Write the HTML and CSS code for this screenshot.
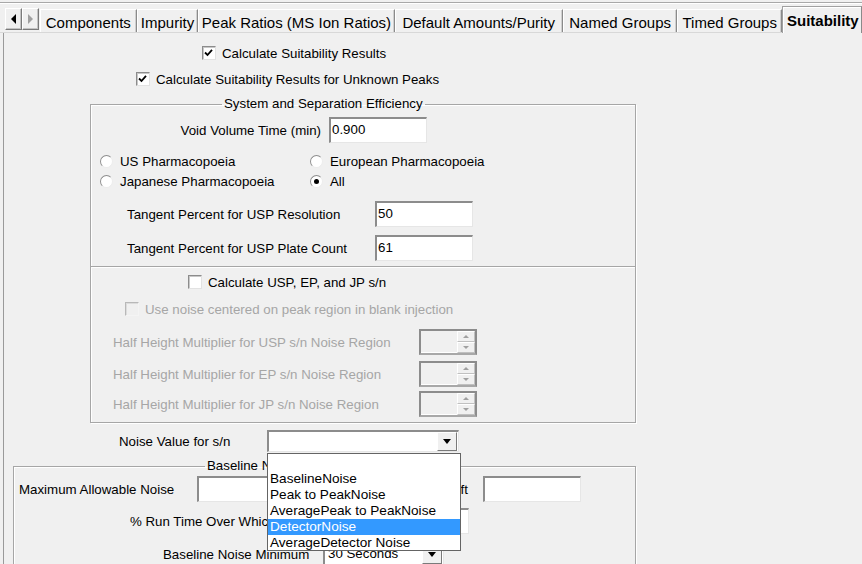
FILE: index.html
```html
<!DOCTYPE html>
<html>
<head>
<meta charset="utf-8">
<link rel="stylesheet" href="styles.css">
</head>
<body>
<div class="win">
  <div class="topline"></div>
  <div class="tabs">
    <div class="arrows">
      <div class="abtn"><span class="tri-l"></span></div>
      <div class="abtn"><span class="tri-r"></span></div>
    </div>
    <div class="tab w1">Components</div>
    <div class="tab w2">Impurity</div>
    <div class="tab w3">Peak Ratios (MS Ion Ratios)</div>
    <div class="tab w4">Default Amounts/Purity</div>
    <div class="tab w5">Named Groups</div>
    <div class="tab w6">Timed Groups</div>
    <div class="tab w7 sel">Suitability</div>
  </div>
  <div class="panel">
    <div class="row r-cb1">
      <span class="cb"><svg viewBox="0 0 13 13" width="13" height="13"><polyline points="3,6.5 5.5,9 10,3.8" fill="none" stroke="#000" stroke-width="1.8"/></svg></span>
      <span class="cbl">Calculate Suitability Results</span>
    </div>
    <div class="row r-cb2">
      <span class="cb"><svg viewBox="0 0 13 13" width="13" height="13"><polyline points="3,6.5 5.5,9 10,3.8" fill="none" stroke="#000" stroke-width="1.8"/></svg></span>
      <span class="cbl">Calculate Suitability Results for Unknown Peaks</span>
    </div>

    <fieldset class="grp g1">
      <legend class="lg1">System and Separation Efficiency</legend>
      <div class="row r-void">
        <span class="lbl l-void">Void Volume Time (min)</span>
        <span class="edit e98">0.900</span>
      </div>
      <div class="row r-rad1">
        <span class="rcol"><span class="radio"></span><span class="rl">US Pharmacopoeia</span></span>
        <span class="rcol"><span class="radio"></span><span class="rl">European Pharmacopoeia</span></span>
      </div>
      <div class="row r-rad2">
        <span class="rcol"><span class="radio"></span><span class="rl">Japanese Pharmacopoeia</span></span>
        <span class="rcol"><span class="radio on"><span class="dot"></span></span><span class="rl">All</span></span>
      </div>
      <div class="row r-tan1">
        <span class="lbl l-tan">Tangent Percent for USP Resolution</span>
        <span class="edit e98">50</span>
      </div>
      <div class="row r-tan2">
        <span class="lbl l-tan">Tangent Percent for USP Plate Count</span>
        <span class="edit e98">61</span>
      </div>
      <div class="divider"></div>
      <div class="row r-cb3">
        <span class="cb"></span>
        <span class="cbl">Calculate USP, EP, and JP s/n</span>
      </div>
      <div class="row r-cb4 dis">
        <span class="cb cbdis"></span>
        <span class="cbl">Use noise centered on peak region in blank injection</span>
      </div>
      <div class="row r-hh1 dis">
        <span class="lbl l-hh">Half Height Multiplier for USP s/n Noise Region</span>
        <span class="spin"><span class="sfield"></span><span class="sbtns"><span class="sb"><span class="st-up"></span></span><span class="sb"><span class="st-dn"></span></span></span></span>
      </div>
      <div class="row r-hh2 dis">
        <span class="lbl l-hh">Half Height Multiplier for EP s/n Noise Region</span>
        <span class="spin"><span class="sfield"></span><span class="sbtns"><span class="sb"><span class="st-up"></span></span><span class="sb"><span class="st-dn"></span></span></span></span>
      </div>
      <div class="row r-hh3 dis">
        <span class="lbl l-hh">Half Height Multiplier for JP s/n Noise Region</span>
        <span class="spin"><span class="sfield"></span><span class="sbtns"><span class="sb"><span class="st-up"></span></span><span class="sb"><span class="st-dn"></span></span></span></span>
      </div>
    </fieldset>

    <div class="row r-noise">
      <span class="lbl l-noise">Noise Value for s/n</span>
      <span class="combo c-noise"><span class="cval"></span><span class="cbtn"><span class="ct"></span></span></span>
    </div>

    <fieldset class="grp g2">
      <legend class="lg2">Baseline Noise</legend>
      <div class="row r-max">
        <span class="lbl l-max">Maximum Allowable Noise</span>
        <span class="edit e98"></span>
        <span class="lbl l-drift">Maximum Allowable Drift</span>
        <span class="edit e98"></span>
      </div>
      <div class="row r-run">
        <span class="lbl l-run">% Run Time Over Which</span>
        <span class="edit e98"></span>
      </div>
      <div class="row r-min">
        <span class="lbl l-min">Baseline Noise Minimum</span>
        <span class="combo c-min"><span class="cval">30 Seconds</span><span class="cbtn"><span class="ct"></span></span></span>
      </div>
    </fieldset>
  </div>

  <div class="dropdown">
    <div class="item"></div>
    <div class="item">BaselineNoise</div>
    <div class="item">Peak to PeakNoise</div>
    <div class="item">AveragePeak to PeakNoise</div>
    <div class="item hl">DetectorNoise</div>
    <div class="item">AverageDetector Noise</div>
  </div>
</div>
</body>
</html>
```

FILE: styles.css
```css
html, body {
  margin: 0;
  padding: 0;
  background: #f0f0f0;
}
.win {
  position: relative;
  width: 862px;
  height: 564px;
  overflow: hidden;
  background: #f0f0f0;
  font-family: "Liberation Sans", Arial, sans-serif;
  font-size: 13.3px;
  color: #000;
}
.topline {
  height: 2px;
  border-bottom: 1px solid #a8a8a8;
  box-shadow: 0 1px 0 #ffffff;
}
/* tabs */
.tabs {
  display: flex;
  align-items: flex-end;
  height: 29px;
  padding-left: 5px;
  border-bottom: 1px solid #d8d8d8;
}
.arrows {
  display: flex;
  width: 34px;
  height: 22px;
  margin-bottom: 2px;
  margin-right: 1px;
}
.abtn {
  width: 15px;
  height: 20px;
  border: 1px solid;
  border-color: #ffffff #7a7a7a #7a7a7a #ffffff;
  box-shadow: inset -1px -1px 0 #c4c4c4;
  display: flex;
  align-items: center;
  justify-content: center;
  background: #f0f0f0;
}
.tri-l {
  width: 0; height: 0;
  border-top: 5px solid transparent;
  border-bottom: 5px solid transparent;
  border-right: 5px solid #000;
}
.tri-r {
  width: 0; height: 0;
  border-top: 5px solid transparent;
  border-bottom: 5px solid transparent;
  border-left: 5px solid #a0a0a0;
}
.tab {
  box-sizing: border-box;
  height: 23px;
  border-top: 1px solid #ffffff;
  border-left: 1px solid #ffffff;
  border-right: 1px solid #8a8a8a;
  box-shadow: inset -1px 0 0 #cfcfcf;
  display: flex;
  align-items: center;
  justify-content: center;
  padding-top: 2px;
  font-size: 15px;
  white-space: nowrap;
  overflow: hidden;
}
.w1 { width: 97px; }
.w2 { width: 62px; }
.w3 { width: 197px; }
.w4 { width: 169px; }
.w5 { width: 115px; }
.w6 { width: 105px; }
.w7 { width: 80px; flex: none; }
.tab.sel {
  height: 27px;
  font-weight: bold;
  border-top: 1px solid #a0a0a0;
  border-left: 1px solid #a0a0a0;
  box-shadow: inset 1px 1px 0 #ffffff;
  padding-top: 0;
  margin-bottom: -1px;
  background: #f0f0f0;
  justify-content: flex-start;
  padding-left: 4px;
}
/* panel */
.panel {
  margin-left: 3px;
  border-left: 1px solid #9a9a9a;
  height: 600px;
  padding-top: 12px;
}
.row {
  display: flex;
  align-items: center;
  white-space: nowrap;
}
.cb {
  box-sizing: border-box;
  width: 14px;
  height: 14px;
  background: #fff;
  border: 1px solid;
  border-color: #8c8c8c #e2e2e2 #e2e2e2 #8c8c8c;
  box-shadow: inset 1px 1px 0 #c8c8c8;
  flex: none;
  display: flex;
}
.cb svg { margin: -1px 0 0 -1px; }
.cbdis {
  background: #f0f0f0;
  border-color: #b8b8b8 #f4f4f4 #f4f4f4 #b8b8b8;
  box-shadow: inset 1px 1px 0 #dcdcdc;
}
.cbl { margin-left: 6px; }
.dis { color: #a6a6a6; }

.r-cb1 { height: 16px; padding-left: 198px; }
.r-cb2 { height: 16px; padding-left: 132px; margin-top: 10px; }

.grp {
  margin: 0;
  padding: 0;
  border: 1px solid #a6a6a6;
  box-shadow: 1px 1px 0 #ffffff, inset 1px 1px 0 #ffffff;
  min-width: 0;
}
.grp legend {
  padding: 0 2px;
  line-height: 16px;
  height: 16px;
}
.g1 {
  margin-top: 9px;
  margin-left: 86px;
  width: 546px;
  box-sizing: border-box;
  padding-bottom: 5px;
}
.lg1 { margin-left: 131px; }

.lbl { flex: none; }
.edit {
  box-sizing: border-box;
  height: 26px;
  background: #fff;
  border-style: solid;
  border-width: 2px 1px 1px 2px;
  border-color: #8c8c8c #e6e6e6 #e6e6e6 #8c8c8c;
  padding: 3px 0 0 1px;
  line-height: 15px;
  flex: none;
  align-self: stretch;
}
.e98 { width: 98px; }

.r-void { height: 26px; margin-top: 5px; }
.l-void { width: 230px; text-align: right; margin-right: 8px; }

.r-rad1 { height: 14px; margin-top: 11px; padding-left: 9px; }
.r-rad2 { height: 14px; margin-top: 6px; padding-left: 9px; }
.rcol { display: flex; align-items: center; width: 210px; }
.radio {
  box-sizing: border-box;
  width: 13px;
  height: 13px;
  border-radius: 50%;
  background: #fff;
  border: 1px solid;
  border-color: #8e8e8e #ececec #ececec #8e8e8e;
  display: flex;
  align-items: center;
  justify-content: center;
  flex: none;
}
.dot { width: 5px; height: 5px; border-radius: 50%; background: #000; }
.rl { margin-left: 7px; }

.r-tan1 { height: 26px; margin-top: 13px; padding-left: 36px; }
.r-tan2 { height: 26px; margin-top: 8px; padding-left: 36px; }
.l-tan { width: 248px; }

.divider {
  margin-top: 5px;
  height: 1px;
  background: #a6a6a6;
  border-bottom: 1px solid #ffffff;
}
.r-cb3 { height: 14px; margin-top: 7px; padding-left: 97px; }
.r-cb4 { height: 14px; margin-top: 13px; padding-left: 34px; }

.r-hh1 { height: 26px; margin-top: 13px; padding-left: 22px; }
.r-hh2 { height: 26px; margin-top: 6px; padding-left: 22px; }
.r-hh3 { height: 26px; margin-top: 4px; padding-left: 22px; }
.l-hh { width: 306px; }

.spin {
  box-sizing: border-box;
  display: flex;
  width: 58px;
  height: 26px;
  border-style: solid;
  border-width: 2px 2px 2px 2px;
  border-color: #8c8c8c #8c8c8c #8c8c8c #8c8c8c;
  border-bottom-color: #a8a8a8;
  flex: none;
}
.sfield { flex: 1; background: #f0f0f0; border-bottom: 1px solid #fff; }
.sbtns { width: 18px; display: flex; flex-direction: column; }
.sb {
  box-sizing: border-box;
  flex: 1;
  border: 1px solid;
  border-color: #ffffff #c0c0c0 #c0c0c0 #ffffff;
  background: #f0f0f0;
  display: flex;
  align-items: center;
  justify-content: center;
}
.st-up {
  width: 0; height: 0;
  border-left: 3px solid transparent;
  border-right: 3px solid transparent;
  border-bottom: 3px solid #a0a0a0;
}
.st-dn {
  width: 0; height: 0;
  border-left: 3px solid transparent;
  border-right: 3px solid transparent;
  border-top: 3px solid #a0a0a0;
}

.r-noise { height: 22px; margin-top: 7px; padding-left: 115px; }
.l-noise { width: 148px; }
.combo {
  box-sizing: border-box;
  display: flex;
  height: 22px;
  background: #fff;
  border-style: solid;
  border-width: 2px 1px 1px 2px;
  border-color: #8c8c8c #e6e6e6 #e6e6e6 #8c8c8c;
  flex: none;
}
.c-noise { width: 192px; }
.cval { flex: 1; padding: 1px 0 0 3px; line-height: 16px; }
.cbtn {
  box-sizing: border-box;
  width: 20px;
  height: 19px;
  border: 1px solid;
  border-color: #ffffff #7a7a7a #7a7a7a #ffffff;
  background: #f0f0f0;
  display: flex;
  align-items: center;
  justify-content: center;
  margin-right: 1px;
}
.ct {
  width: 0; height: 0;
  border-left: 4px solid transparent;
  border-right: 4px solid transparent;
  border-top: 5px solid #000;
}

.g2 {
  margin-top: 6px;
  margin-left: 9px;
  width: 623px;
  box-sizing: border-box;
  padding-bottom: 20px;
}
.lg2 { margin-left: 191px; }
.r-max { height: 26px; margin-top: 2px; padding-left: 5px; }
.l-max { width: 178px; }
.l-drift { width: 173px; text-align: right; margin-right: 15px; }
.r-run { height: 26px; margin-top: 6px; padding-left: 116px; }
.l-run { width: 241px; }
.r-min { height: 22px; margin-top: 9px; padding-left: 149px; }
.l-min { width: 160px; }
.c-min { width: 121px; }

/* dropdown list overlay */
.dropdown {
  position: absolute;
  left: 267px;
  top: 453px;
  width: 194px;
  height: 98px;
  box-sizing: border-box;
  background: #fff;
  border: 1px solid #646464;
  padding-top: 1px;
  font-size: 13.6px;
}
.item {
  height: 16px;
  line-height: 16px;
  padding-left: 2px;
  white-space: nowrap;
}
.item.hl {
  background: #3399ff;
  color: #fff;
}
```
